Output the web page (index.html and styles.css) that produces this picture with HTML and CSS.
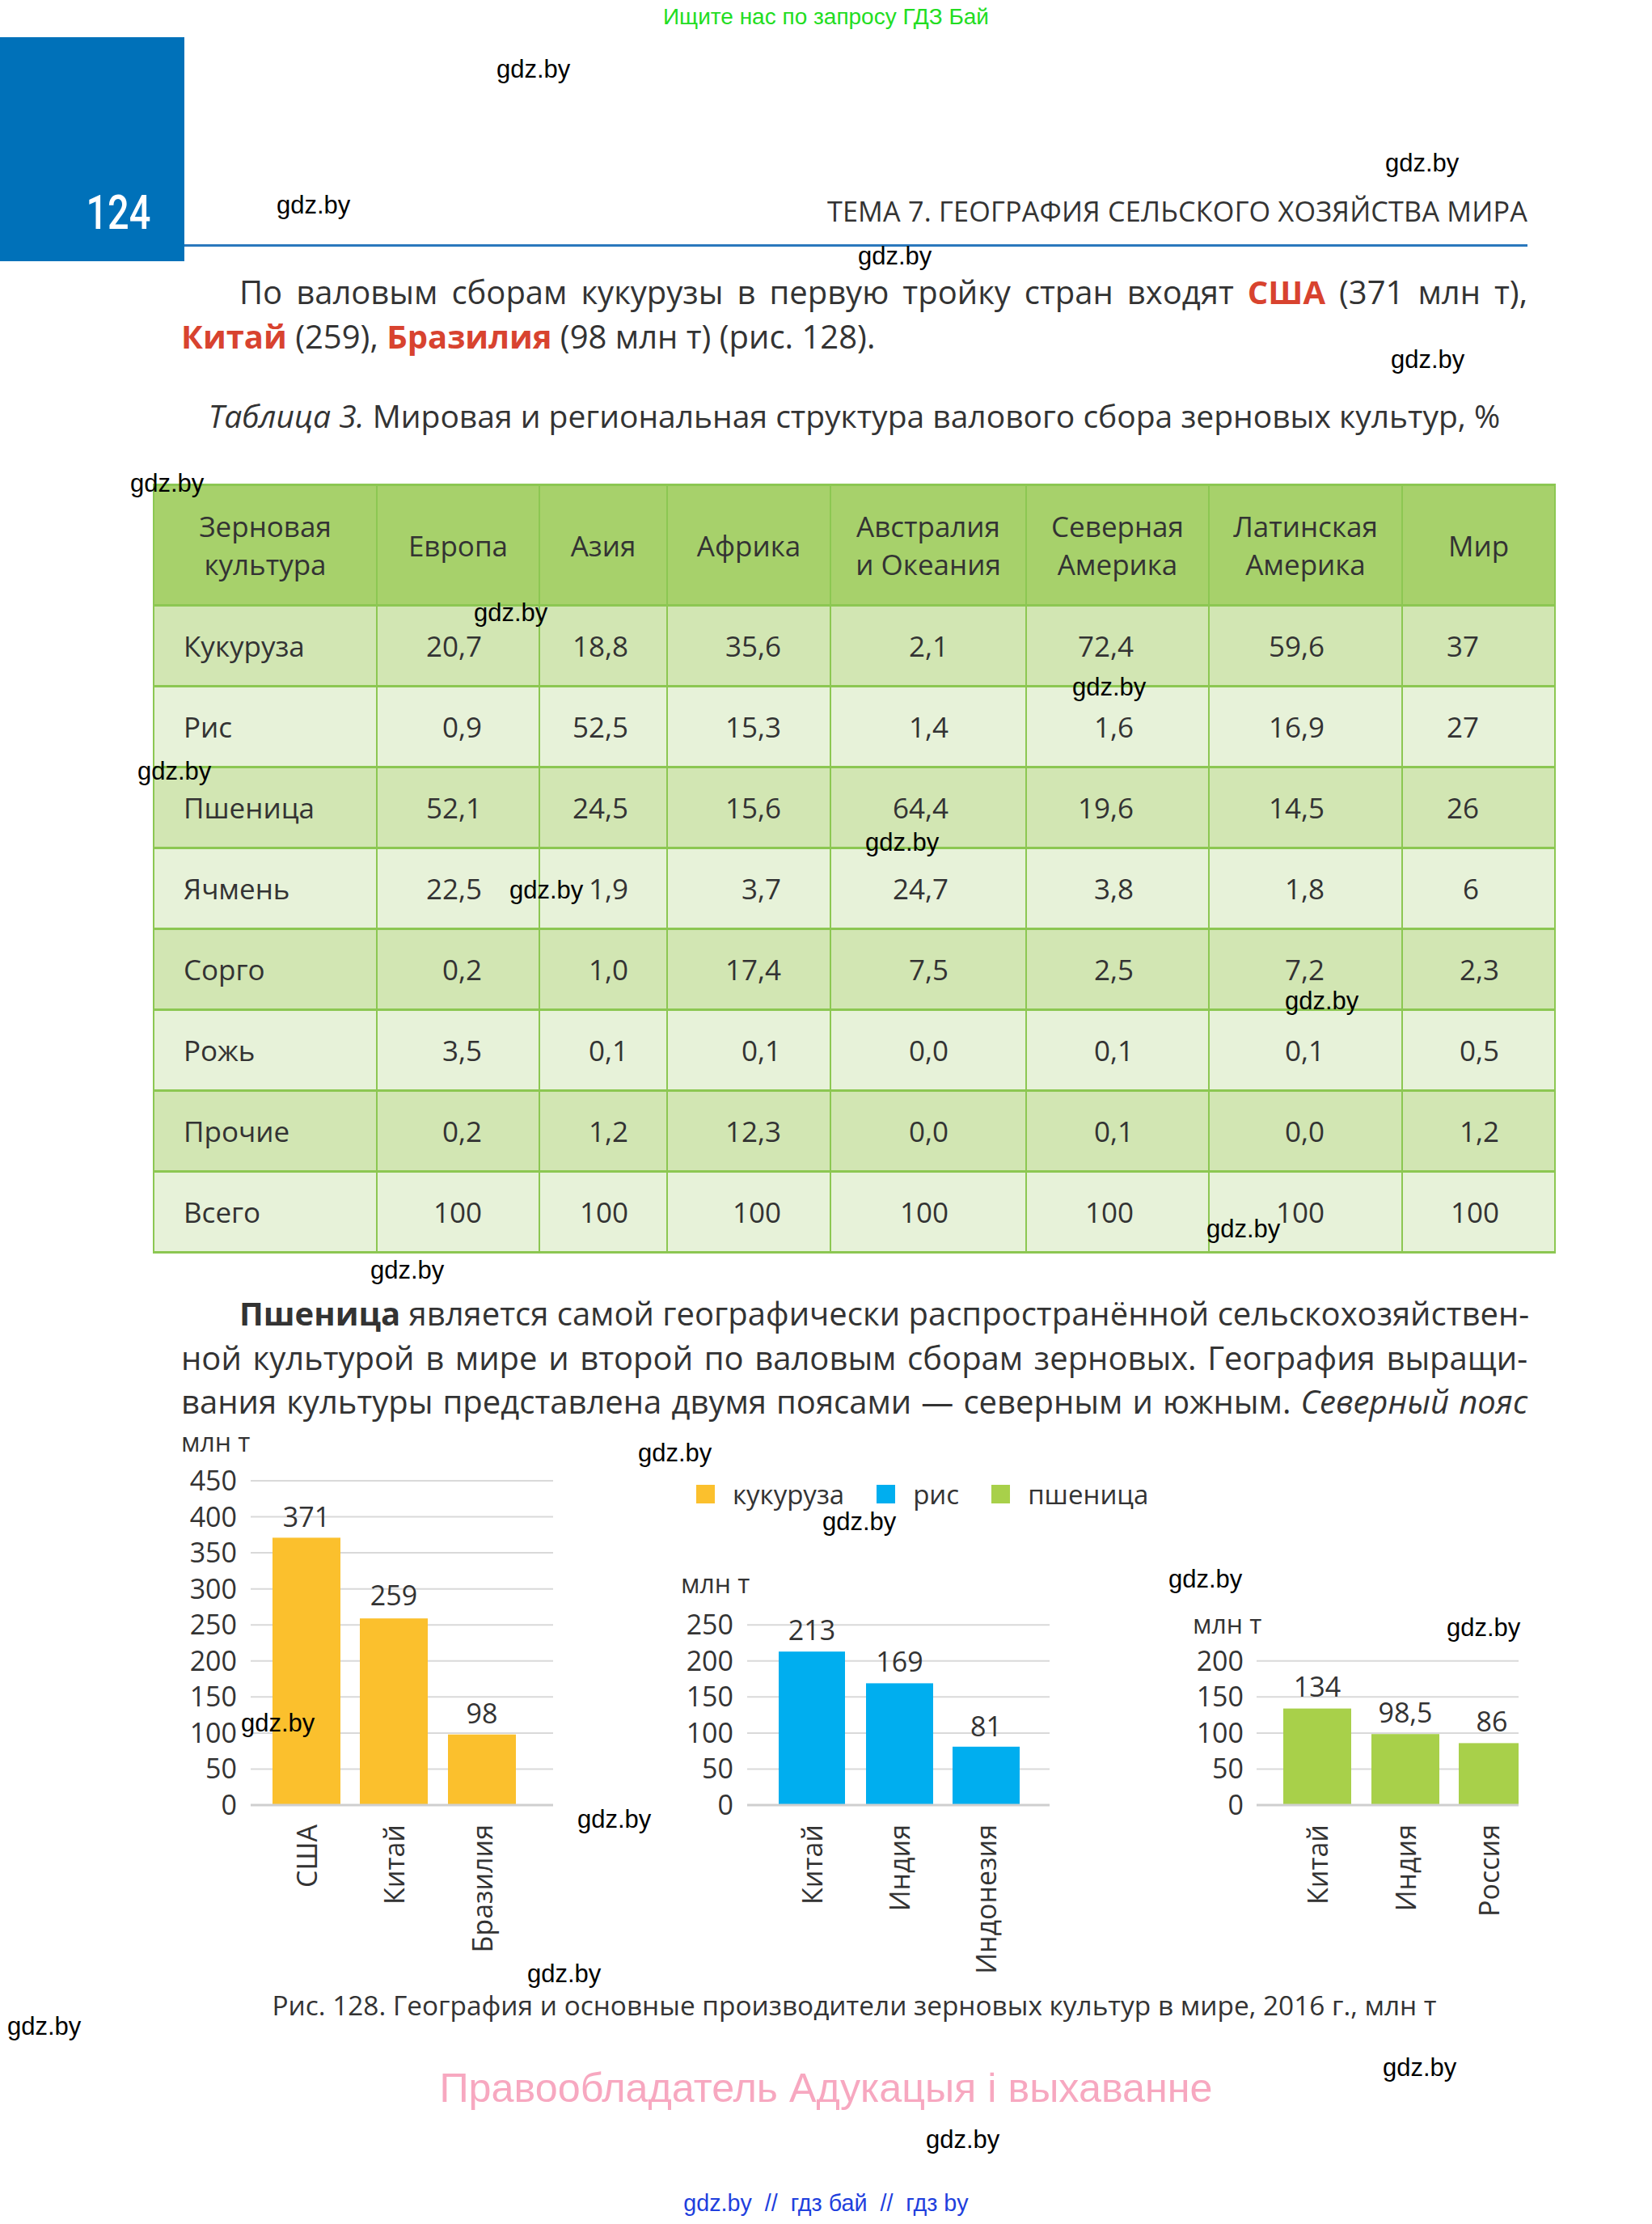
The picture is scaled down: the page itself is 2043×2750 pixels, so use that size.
FILE: index.html
```html
<!DOCTYPE html>
<html lang="ru">
<head>
<meta charset="utf-8">
<title>Тема 7. География сельского хозяйства мира — 124</title>
<link rel="stylesheet" href="styles.css">
</head>
<body>
<div class="page">
  <div class="topnote">Ищите нас по запросу ГДЗ Бай</div>

  <header class="header">
    <div class="pagenum"><span>124</span></div>
    <div class="head-right"><span class="head-title">ТЕМА 7. ГЕОГРАФИЯ СЕЛЬСКОГО ХОЗЯЙСТВА МИРА</span></div>
  </header>

  <main class="content">
    <p class="para">
      <span class="line first">По валовым сборам кукурузы в первую тройку стран входят <b class="red">США</b> (371 млн т),</span>
      <span class="line last"><b class="red">Китай</b> (259), <b class="red">Бразилия</b> (98 млн т) (рис. 128).</span>
    </p>

    <p class="tcaption"><i>Таблица 3.</i> Мировая и региональная структура валового сбора зерновых культур, %</p>

    <table class="grain">
      <colgroup>
        <col class="c1"><col class="c2"><col class="c3"><col class="c4"><col class="c5"><col class="c6"><col class="c7"><col class="c8">
      </colgroup>
      <thead>
        <tr>
          <th>Зерновая<br>культура</th><th>Европа</th><th>Азия</th><th>Африка</th><th>Австралия<br>и Океания</th><th>Северная<br>Америка</th><th>Латинская<br>Америка</th><th>Мир</th>
        </tr>
      </thead>
      <tbody>
        <tr class="dark"><td>Кукуруза</td><td>20,7</td><td>18,8</td><td>35,6</td><td>2,1</td><td>72,4</td><td>59,6</td><td class="int">37</td></tr>
        <tr class="light"><td>Рис</td><td>0,9</td><td>52,5</td><td>15,3</td><td>1,4</td><td>1,6</td><td>16,9</td><td class="int">27</td></tr>
        <tr class="dark"><td>Пшеница</td><td>52,1</td><td>24,5</td><td>15,6</td><td>64,4</td><td>19,6</td><td>14,5</td><td class="int">26</td></tr>
        <tr class="light"><td>Ячмень</td><td>22,5</td><td>1,9</td><td>3,7</td><td>24,7</td><td>3,8</td><td>1,8</td><td class="int">6</td></tr>
        <tr class="dark"><td>Сорго</td><td>0,2</td><td>1,0</td><td>17,4</td><td>7,5</td><td>2,5</td><td>7,2</td><td>2,3</td></tr>
        <tr class="light"><td>Рожь</td><td>3,5</td><td>0,1</td><td>0,1</td><td>0,0</td><td>0,1</td><td>0,1</td><td>0,5</td></tr>
        <tr class="dark"><td>Прочие</td><td>0,2</td><td>1,2</td><td>12,3</td><td>0,0</td><td>0,1</td><td>0,0</td><td>1,2</td></tr>
        <tr class="light"><td>Всего</td><td>100</td><td>100</td><td>100</td><td>100</td><td>100</td><td>100</td><td>100</td></tr>
      </tbody>
    </table>

    <p class="para para2">
      <span class="line first"><b>Пшеница</b> является самой географически распространённой сельскохозяйствен-</span>
      <span class="line">ной культурой в мире и второй по валовым сборам зерновых. География выращи-</span>
      <span class="line">вания культуры представлена двумя поясами — северным и южным. <i>Северный пояс</i></span>
    </p>

    <figure class="figure">
      <div class="charts">
        <svg class="chart chart1" width="560" height="690" viewBox="0 0 560 690">
          <text class="unit" x="0" y="34">млн т</text>
          <g class="grid">
            <line x1="86" x2="460" y1="426.4" y2="426.4"/>
            <line x1="86" x2="460" y1="381.9" y2="381.9"/>
            <line x1="86" x2="460" y1="337.3" y2="337.3"/>
            <line x1="86" x2="460" y1="292.8" y2="292.8"/>
            <line x1="86" x2="460" y1="248.2" y2="248.2"/>
            <line x1="86" x2="460" y1="203.7" y2="203.7"/>
            <line x1="86" x2="460" y1="159.1" y2="159.1"/>
            <line x1="86" x2="460" y1="114.6" y2="114.6"/>
            <line x1="86" x2="460" y1="70" y2="70"/>
          </g>
          <g class="ylab">
            <text x="69" y="483">0</text>
            <text x="69" y="438.4">50</text>
            <text x="69" y="393.9">100</text>
            <text x="69" y="349.3">150</text>
            <text x="69" y="304.8">200</text>
            <text x="69" y="260.2">250</text>
            <text x="69" y="215.7">300</text>
            <text x="69" y="171.1">350</text>
            <text x="69" y="126.6">400</text>
            <text x="69" y="82">450</text>
          </g>
          <g class="bar-corn">
            <rect x="113" y="140.4" width="84" height="330.6"/>
            <rect x="221" y="240.2" width="84" height="230.8"/>
            <rect x="330" y="383.7" width="84" height="87.3"/>
          </g>
          <line class="axis" x1="86" x2="460" y1="471" y2="471"/>
          <g class="vlab">
            <text x="155" y="127">371</text>
            <text x="263" y="224">259</text>
            <text x="372" y="370">98</text>
          </g>
          <g class="clab">
            <text transform="translate(168,495) rotate(-90)">США</text>
            <text transform="translate(276,495) rotate(-90)">Китай</text>
            <text transform="translate(385,495) rotate(-90)">Бразилия</text>
          </g>
        </svg>

        <div class="col2">
          <div class="legend">
            <span class="lg-item"><span class="sw sw-corn"></span>кукуруза</span>
            <span class="lg-item"><span class="sw sw-rice"></span>рис</span>
            <span class="lg-item"><span class="sw sw-wheat"></span>пшеница</span>
          </div>
          <svg class="chart chart2" width="560" height="583" viewBox="0 0 560 583">
            <text class="unit" x="58" y="102">млн т</text>
            <g class="grid">
              <line x1="140" x2="514" y1="319.4" y2="319.4"/>
              <line x1="140" x2="514" y1="274.9" y2="274.9"/>
              <line x1="140" x2="514" y1="230.3" y2="230.3"/>
              <line x1="140" x2="514" y1="185.8" y2="185.8"/>
              <line x1="140" x2="514" y1="141.2" y2="141.2"/>
            </g>
            <g class="ylab">
              <text x="123" y="376">0</text>
              <text x="123" y="331.4">50</text>
              <text x="123" y="286.9">100</text>
              <text x="123" y="242.3">150</text>
              <text x="123" y="197.8">200</text>
              <text x="123" y="153.2">250</text>
            </g>
            <g class="bar-rice">
              <rect x="179" y="174.2" width="82" height="189.8"/>
              <rect x="287" y="213.4" width="83" height="150.6"/>
              <rect x="394" y="291.8" width="83" height="72.2"/>
            </g>
            <line class="axis" x1="140" x2="514" y1="364" y2="364"/>
            <g class="vlab">
              <text x="220" y="160">213</text>
              <text x="328.5" y="199">169</text>
              <text x="435.5" y="279">81</text>
            </g>
            <g class="clab">
              <text transform="translate(233,388) rotate(-90)">Китай</text>
              <text transform="translate(341,388) rotate(-90)">Индия</text>
              <text transform="translate(448,388) rotate(-90)">Индонезия</text>
            </g>
          </svg>
        </div>

        <svg class="chart chart3" width="545" height="690" viewBox="0 0 545 690">
          <text class="unit" x="131" y="259">млн т</text>
          <g class="grid">
            <line x1="210" x2="534" y1="426.4" y2="426.4"/>
            <line x1="210" x2="534" y1="381.9" y2="381.9"/>
            <line x1="210" x2="534" y1="337.3" y2="337.3"/>
            <line x1="210" x2="534" y1="292.8" y2="292.8"/>
          </g>
          <g class="ylab">
            <text x="194" y="483">0</text>
            <text x="194" y="438.4">50</text>
            <text x="194" y="393.9">100</text>
            <text x="194" y="349.3">150</text>
            <text x="194" y="304.8">200</text>
          </g>
          <g class="bar-wheat">
            <rect x="243" y="351.6" width="84" height="119.4"/>
            <rect x="352" y="383.2" width="84" height="87.8"/>
            <rect x="460" y="394.4" width="74" height="76.6"/>
          </g>
          <line class="axis" x1="210" x2="534" y1="471" y2="471"/>
          <g class="vlab">
            <text x="285" y="337">134</text>
            <text x="394" y="369">98,5</text>
            <text x="501" y="380">86</text>
          </g>
          <g class="clab">
            <text transform="translate(298,495) rotate(-90)">Китай</text>
            <text transform="translate(407,495) rotate(-90)">Индия</text>
            <text transform="translate(510,495) rotate(-90)">Россия</text>
          </g>
        </svg>
      </div>
      <figcaption class="fcaption">Рис. 128. География и основные производители зерновых культур в мире, 2016 г., млн т</figcaption>
    </figure>
  </main>

  <footer class="footer">
    <div class="owner">Правообладатель Адукацыя і выхаванне</div>
    <div class="links">gdz.by &nbsp;//&nbsp; гдз бай &nbsp;//&nbsp; гдз by</div>
  </footer>

  <div class="wm w1">gdz.by</div>
  <div class="wm w2">gdz.by</div>
  <div class="wm w3">gdz.by</div>
  <div class="wm w4">gdz.by</div>
  <div class="wm w5">gdz.by</div>
  <div class="wm w6">gdz.by</div>
  <div class="wm w7">gdz.by</div>
  <div class="wm w8">gdz.by</div>
  <div class="wm w9">gdz.by</div>
  <div class="wm w10">gdz.by</div>
  <div class="wm w11">gdz.by</div>
  <div class="wm w12">gdz.by</div>
  <div class="wm w13">gdz.by</div>
  <div class="wm w14">gdz.by</div>
  <div class="wm w15">gdz.by</div>
  <div class="wm w16">gdz.by</div>
  <div class="wm w17">gdz.by</div>
  <div class="wm w18">gdz.by</div>
  <div class="wm w19">gdz.by</div>
  <div class="wm w20">gdz.by</div>
  <div class="wm w21">gdz.by</div>
  <div class="wm w22">gdz.by</div>
  <div class="wm w23">gdz.by</div>
  <div class="wm w24">gdz.by</div>
</div>
</body>
</html>
```

FILE: styles.css
```css
* { box-sizing: border-box; }

html, body {
  margin: 0;
  padding: 0;
  background: #ffffff;
}

.page {
  position: relative;
  width: 2043px;
  height: 2750px;
  overflow: hidden;
  font-family: "Open Sans", "Noto Sans", sans-serif;
  color: #333333;
}

/* top note */
.topnote {
  height: 42px;
  font-family: "Liberation Sans", Arial, sans-serif;
  font-size: 28px;
  line-height: 42px;
  color: #22dd22;
  text-align: center;
}

/* header */
.header {
  display: flex;
  margin-top: 4px;
  height: 277px;
}

.pagenum {
  width: 228px;
  height: 277px;
  background: #0071b9;
  display: flex;
  align-items: flex-end;
  justify-content: flex-end;
  padding: 0 42px 30px 0;
}

.pagenum span {
  display: block;
  font-family: "Roboto", "Open Sans", sans-serif;
  font-weight: 500;
  font-size: 60px;
  line-height: 60px;
  color: #ffffff;
  transform: scaleX(0.78);
  transform-origin: right center;
}

.head-right {
  flex: 1;
  margin-right: 154px;
  height: 259px;
  border-bottom: 3px solid #2a78bd;
  display: flex;
  align-items: flex-end;
  justify-content: flex-end;
  padding-bottom: 19px;
}

.head-title {
  font-size: 34.2px;
  line-height: 44px;
  color: #333333;
  letter-spacing: 0.2px;
}

/* content column */
.content {
  margin-left: 224px;
  width: 1665px;
}

.para {
  margin: 11px 0 0 0;
  font-size: 40px;
  line-height: 54.5px;
}

.line {
  display: block;
  white-space: nowrap;
  text-align: justify;
  text-align-last: justify;
}

.line.first {
  padding-left: 72px;
}

.line.last {
  text-align-last: left;
}

.para b {
  font-weight: 700;
}

.red {
  color: #d8432f;
}

.tcaption {
  margin: 44px 0 0 0;
  font-size: 39px;
  line-height: 54px;
  text-align: center;
}

/* table */
.grain {
  margin: 57px 0 0 -35px;
  width: 1733px;
  table-layout: fixed;
  border-collapse: collapse;
  font-size: 35px;
  color: #333333;
}

.c1 { width: 276px; }
.c2 { width: 201px; }
.c3 { width: 158px; }
.c4 { width: 202px; }
.c5 { width: 242px; }
.c6 { width: 226px; }
.c7 { width: 239px; }
.c8 { width: 189px; }

.grain th,
.grain td {
  border-left: 2px solid #8cc752;
  border-right: 2px solid #8cc752;
  border-top: 3px solid #8cc752;
  border-bottom: 3px solid #8cc752;
  padding: 0;
  vertical-align: middle;
}

.grain th {
  height: 149px;
  background: #a7d16b;
  font-weight: 400;
  line-height: 47px;
  text-align: center;
}

.grain td {
  height: 100px;
  line-height: 40px;
  text-align: right;
}

.grain td:nth-child(1) { text-align: left; padding-left: 36px; }
.grain td:nth-child(2) { padding-right: 70px; }
.grain td:nth-child(3) { padding-right: 47px; }
.grain td:nth-child(4) { padding-right: 60px; }
.grain td:nth-child(5) { padding-right: 95px; }
.grain td:nth-child(6) { padding-right: 92px; }
.grain td:nth-child(7) { padding-right: 95px; }
.grain td:nth-child(8) { padding-right: 68px; }
.grain td.int { padding-right: 93px; }

.grain tr.dark td { background: #d2e6b3; }
.grain tr.light td { background: #e7f2d9; }

.para2 {
  margin-top: 47px;
}

.para2 b {
  color: #333333;
}

/* figure */
.figure {
  margin: 0;
}

.charts {
  display: flex;
  height: 690px;
}

.chart {
  display: block;
  flex: none;
  font-family: "Open Sans", "Noto Sans", sans-serif;
}

.col2 {
  width: 560px;
  display: flex;
  flex-direction: column;
}

.legend {
  display: flex;
  gap: 40px;
  padding: 67px 0 0 77px;
  height: 107px;
  font-size: 33px;
  line-height: 40px;
  color: #333333;
}

.lg-item {
  display: flex;
  align-items: center;
}

.sw {
  display: inline-block;
  width: 23px;
  height: 23px;
  margin-right: 22px;
}

.sw-corn { background: #fbc02d; }
.sw-rice { background: #00aeef; }
.sw-wheat { background: #a8d04a; }

.chart .unit {
  font-size: 32px;
  fill: #333333;
}

.chart .grid line {
  stroke: #d9d9d9;
  stroke-width: 2;
}

.chart .axis {
  stroke: #cfcfcf;
  stroke-width: 3;
}

.chart .ylab text {
  font-size: 34px;
  fill: #333333;
  text-anchor: end;
}

.chart .vlab text {
  font-size: 34px;
  fill: #333333;
  text-anchor: middle;
}

.chart .clab text {
  font-size: 34px;
  fill: #333333;
  text-anchor: end;
}

.bar-corn rect { fill: #fbc02d; }
.bar-rice rect { fill: #00aeef; }
.bar-wheat rect { fill: #a8d04a; }

.fcaption {
  margin: 1px 0 0 0;
  font-size: 33.4px;
  line-height: 54px;
  text-align: center;
  color: #333333;
}

/* footer */
.footer {
  text-align: center;
  font-family: "Liberation Sans", Arial, sans-serif;
}

.owner {
  margin-top: 46px;
  font-size: 50.3px;
  line-height: 60px;
  color: #f7a8c0;
}

.links {
  margin-top: 94px;
  font-size: 28.7px;
  line-height: 36px;
  color: #1f3fdd;
}

/* watermarks overlaid on the page */
.wm {
  position: absolute;
  font-family: "Liberation Sans", Arial, sans-serif;
  font-size: 31px;
  line-height: 36px;
  color: #000000;
  white-space: nowrap;
}

.w1 { left: 614px; top: 68px; }
.w2 { left: 1713px; top: 184px; }
.w3 { left: 342px; top: 236px; }
.w4 { left: 1061px; top: 299px; }
.w5 { left: 1720px; top: 427px; }
.w6 { left: 161px; top: 580px; }
.w7 { left: 586px; top: 740px; }
.w8 { left: 1326px; top: 832px; }
.w9 { left: 170px; top: 936px; }
.w10 { left: 1070px; top: 1024px; }
.w11 { left: 630px; top: 1083px; }
.w12 { left: 1589px; top: 1220px; }
.w13 { left: 1492px; top: 1502px; }
.w14 { left: 458px; top: 1553px; }
.w15 { left: 789px; top: 1779px; }
.w16 { left: 1017px; top: 1864px; }
.w17 { left: 1445px; top: 1935px; }
.w18 { left: 1789px; top: 1995px; }
.w19 { left: 298px; top: 2113px; }
.w20 { left: 714px; top: 2232px; }
.w21 { left: 652px; top: 2423px; }
.w22 { left: 9px; top: 2488px; }
.w23 { left: 1710px; top: 2539px; }
.w24 { left: 1145px; top: 2628px; }
```
